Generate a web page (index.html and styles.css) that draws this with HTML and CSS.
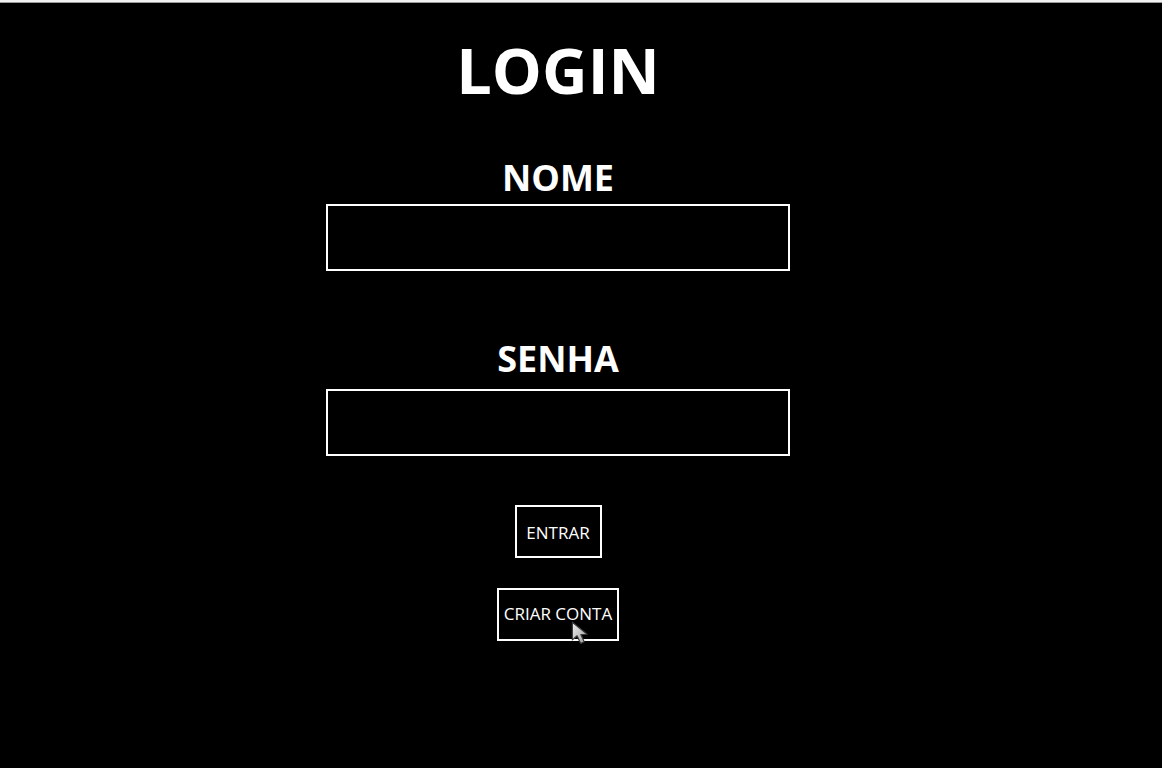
FILE: index.html
```html
<!DOCTYPE html>
<html lang="pt">
<head>
<meta charset="utf-8">
<title>Login</title>
<link rel="stylesheet" href="styles.css">
</head>
<body>
<div class="topbar"></div>
<main class="page">
  <h1 class="title">LOGIN</h1>
  <form class="form">
    <label class="label" for="nome">NOME</label>
    <input class="field" id="nome" type="text">
    <label class="label label-senha" for="senha">SENHA</label>
    <input class="field" id="senha" type="password">
    <button class="btn btn-entrar" type="button">ENTRAR</button>
    <button class="btn btn-criar" type="button">CRIAR CONTA
      <svg class="cursor" width="24" height="26" viewBox="0 0 20 22"><defs><linearGradient id="cg" x1="0" y1="0" x2="1" y2="1"><stop offset="0" stop-color="#f0f0f0"/><stop offset="1" stop-color="#9a9a9a"/></linearGradient></defs><path d="M1 1 L1 16 L5 12.5 L8 19 L11 17.6 L8.2 11.4 L13.5 11.2 Z" fill="url(#cg)" stroke="#3a3a3a" stroke-width="1" stroke-linejoin="round"/></svg>
    </button>
  </form>
</main>
</body>
</html>
```

FILE: styles.css
```css
* { box-sizing: border-box; }
html, body { margin: 0; padding: 0; background: #000; }
body {
  font-family: "Open Sans", "Liberation Sans", sans-serif;
  color: #fff;
  width: 1162px;
  height: 768px;
  overflow: hidden;
}
.topbar {
  height: 3px;
  background: #f2f2f2;
  border-bottom: 1px solid #9a9a9a;
}
.page {
  width: 1116px;
  display: flex;
  flex-direction: column;
  align-items: center;
}
.title {
  margin: 24px 0 0;
  font-size: 63px;
  font-weight: 700;
  line-height: normal;
}
.form {
  display: flex;
  flex-direction: column;
  align-items: center;
  margin-top: 41px;
}
.label {
  font-size: 36px;
  font-weight: 700;
  line-height: normal;
  margin-bottom: 2px;
}
.label-senha {
  margin-top: 63px;
  margin-bottom: 6px;
}
.field {
  width: 464px;
  height: 67px;
  background: #000;
  border: 2px solid #fff;
  outline: none;
  color: #fff;
  font-family: inherit;
}
.btn {
  position: relative;
  height: 53px;
  background: #000;
  border: 2px solid #fff;
  color: #fff;
  font-family: "Open Sans", "Liberation Sans", sans-serif;
  font-size: 17px;
  padding: 0;
}
.btn-entrar { width: 87px; margin-top: 49px; padding-top: 2px; }
.btn-criar { width: 122px; margin-top: 30px; padding-bottom: 3px; }
.cursor {
  position: absolute;
  left: 72px;
  top: 31px;
}
```
